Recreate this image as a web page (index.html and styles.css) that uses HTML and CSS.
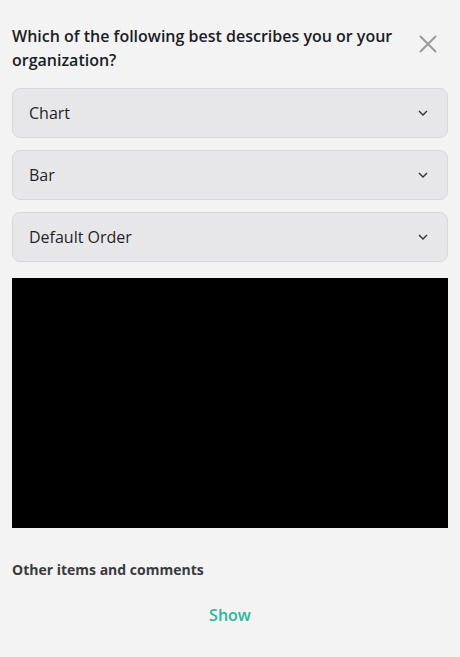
FILE: index.html
```html
<!DOCTYPE html>
<html>
<head>
<meta charset="utf-8">
<link rel="stylesheet" href="styles.css">
</head>
<body>
<div class="panel">
  <div class="header">
    <h1 class="title">Which of the following best describes you or your organization?</h1>
    <button class="close" aria-label="Close">
      <svg width="20" height="20" viewBox="0 0 20 20"><path d="M2 2 L18 18 M18 2 L2 18" stroke="#9a9a9a" stroke-width="2" fill="none"/></svg>
    </button>
  </div>
  <div class="selects">
    <div class="select"><span>Chart</span><svg class="chev" width="10" height="6" viewBox="0 0 10 6"><path d="M1 1 L5 5 L9 1" stroke="#333" stroke-width="1.4" fill="none"/></svg></div>
    <div class="select"><span>Bar</span><svg class="chev" width="10" height="6" viewBox="0 0 10 6"><path d="M1 1 L5 5 L9 1" stroke="#333" stroke-width="1.4" fill="none"/></svg></div>
    <div class="select"><span>Default Order</span><svg class="chev" width="10" height="6" viewBox="0 0 10 6"><path d="M1 1 L5 5 L9 1" stroke="#333" stroke-width="1.4" fill="none"/></svg></div>
  </div>
  <div class="chart"></div>
  <div class="other">Other items and comments</div>
  <div class="show">Show</div>
</div>
</body>
</html>
```
FILE: styles.css
```css
html, body {
  margin: 0;
  padding: 0;
  background: #f3f3f3;
  font-family: "Open Sans", "Liberation Sans", sans-serif;
}
.panel {
  padding: 24px 12px 0 12px;
}
.header {
  display: flex;
  justify-content: space-between;
  align-items: flex-start;
  gap: 4px;
}
.title {
  margin: 0;
  flex: 1;
  font-size: 16px;
  font-weight: 600;
  line-height: 24px;
  color: #1c1c28;
}
.close {
  flex: none;
  background: none;
  border: none;
  padding: 0;
  margin: 10px 10px 0 0;
  width: 20px;
  height: 20px;
  display: flex;
}
.selects {
  display: flex;
  flex-direction: column;
  gap: 12px;
  margin-top: 16px;
}
.select {
  height: 48px;
  border: 1px solid #d9d9db;
  border-radius: 8px;
  background: #e7e7e9;
  display: flex;
  align-items: center;
  justify-content: space-between;
  padding: 0 19px 0 16px;
  font-size: 16px;
  color: #1f1f2a;
}
.chart {
  margin-top: 16px;
  height: 250px;
  background: #000;
}
.other {
  margin-top: 32px;
  font-size: 14px;
  font-weight: 700;
  color: #3a3a3e;
  line-height: 20px;
}
.show {
  margin-top: 24px;
  text-align: center;
  font-size: 16px;
  font-weight: 600;
  color: #2bb79a;
  line-height: 22px;
}
```
